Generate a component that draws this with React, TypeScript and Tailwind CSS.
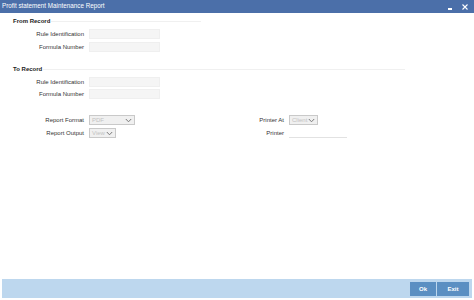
import React from 'react'

const font = { fontFamily: '"Liberation Sans", Arial, sans-serif' }

function Chevron() {
  return (
    <svg width="7" height="5" viewBox="0 0 7 5" className="shrink-0">
      <path d="M0.8 1 L3.5 3.8 L6.2 1" fill="none" stroke="#7a7a7a" strokeWidth="1" />
    </svg>
  )
}

function TextBox() {
  return <div className="w-[71px] h-[10px] bg-[#f5f5f5] border border-[#efefef]" />
}

function SelectBox({ value, width }: { value: string; width: string }) {
  return (
    <div
      className={`${width} h-[10px] flex items-center justify-between pl-[2px] pr-[2px] bg-[#f0f0f0] border border-[#c9c9c9] text-[6px] leading-none text-[#c2c2c2]`}
    >
      <span>{value}</span>
      <Chevron />
    </div>
  )
}

function Row({ label, children }: { label: string; children: React.ReactNode }) {
  return (
    <div className="flex items-center h-[10px]">
      <span className="w-[71px] text-right text-[6px] leading-none text-[#333]">{label}</span>
      <div className="ml-[5px]">{children}</div>
    </div>
  )
}

function SectionHeader({ title, lineWidth }: { title: string; lineWidth: string }) {
  return (
    <div className="flex items-center h-[6px]">
      <span className="text-[6px] leading-none font-bold text-[#222]">{title}</span>
      <div className={`${lineWidth} h-px bg-[#f0f0f0] ml-[1px]`} />
    </div>
  )
}

export default function App() {
  return (
    <div className="w-[474px] h-[300px] bg-white flex flex-col" style={font}>
      {/* title bar */}
      <div className="h-[13px] bg-[#4b6fa9] flex items-center justify-between pl-[2px] pr-[6px]">
        <span className="text-[6.3px] leading-none text-white">Profit statement Maintenance Report</span>
        <div className="flex items-center gap-[10px]">
          <div className="w-[4px] h-[1.5px] bg-white mt-[5px]" />
          <svg width="6" height="6" viewBox="0 0 6 6">
            <path d="M0.5 0.5 L5.5 5.5 M5.5 0.5 L0.5 5.5" stroke="white" strokeWidth="1.1" />
          </svg>
        </div>
      </div>

      {/* body */}
      <div className="flex-1 pl-[13px] pt-[5px]">
        <SectionHeader title="From Record" lineWidth="w-[150px]" />
        <div className="flex flex-col gap-[3px] mt-[5px] pl-[0px]">
          <Row label="Rule Identification">
            <TextBox />
          </Row>
          <Row label="Formula Number">
            <TextBox />
          </Row>
        </div>

        <div className="mt-[14px]">
          <SectionHeader title="To Record" lineWidth="w-[362px]" />
        </div>
        <div className="flex flex-col gap-[2px] mt-[5px]">
          <Row label="Rule Identification">
            <TextBox />
          </Row>
          <Row label="Formula Number">
            <TextBox />
          </Row>
        </div>

        <div className="flex flex-col gap-[3px] mt-[16px]">
          <div className="flex">
            <div className="w-[200px]">
              <Row label="Report Format">
                <SelectBox value="PDF" width="w-[46px]" />
              </Row>
            </div>
            <Row label="Printer At">
              <SelectBox value="Client" width="w-[29px]" />
            </Row>
          </div>
          <div className="flex">
            <div className="w-[200px]">
              <Row label="Report Output">
                <SelectBox value="View" width="w-[27px]" />
              </Row>
            </div>
            <Row label="Printer">
              <div className="w-[58px] h-[10px] border-b border-[#e2e2e2]" />
            </Row>
          </div>
        </div>
      </div>

      {/* footer */}
      <div className="h-[19px] mx-[2px] mb-[2px] bg-[#bdd7ee] flex items-center justify-end pr-[3px] gap-[1px]">
        <button className="w-[26px] h-[14px] bg-[#5b8fc2] text-white text-[6px] font-bold leading-none">Ok</button>
        <button className="w-[32px] h-[14px] bg-[#5b8fc2] text-white text-[6px] font-bold leading-none">Exit</button>
      </div>
    </div>
  )
}
